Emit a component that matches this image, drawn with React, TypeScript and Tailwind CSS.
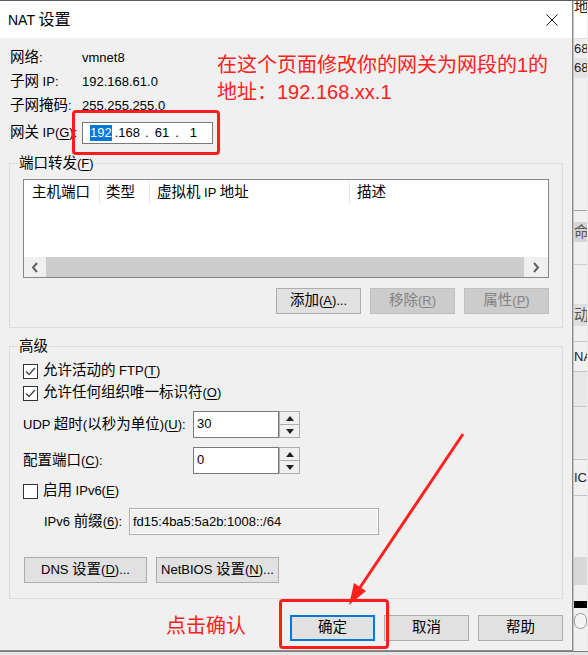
import React from 'react';

const CJK_RE = /([\u3000-\u303f\u4e00-\u9fff\uff00-\uffef]+)/;

// Latin text runs at Arial widths, CJK runs a bit larger (YaHei UI look)
function Txt({ s }: { s: string }) {
  return (
    <span>
      {s.split(CJK_RE).map((p, i) =>
        i % 2 === 1 ? (
          <span key={i} className="text-[14.5px]">
            {p}
          </span>
        ) : (
          p
        )
      )}
    </span>
  );
}

// '&' marks the access-key letter, underlined like a Win32 label
function Lbl({ s }: { s: string }) {
  const i = s.indexOf('&');
  if (i < 0) return <Txt s={s} />;
  return (
    <span>
      <Txt s={s.slice(0, i)} />
      <span className="underline underline-offset-2">{s[i + 1]}</span>
      <Txt s={s.slice(i + 2)} />
    </span>
  );
}

interface BtnProps {
  s: string;
  w?: string;
  disabled?: boolean;
  primary?: boolean;
}

function Btn({ s, w = 'w-[85px]', disabled, primary }: BtnProps) {
  let look = 'border border-[#adadad] bg-[#e1e1e1]';
  if (disabled) look = 'border border-[#bfbfbf] bg-[#cccccc] text-[#838383]';
  if (primary) look = 'border-2 border-[#0078d7] bg-[#e1e1e1]';
  return (
    <div className={`${w} h-[26px] flex items-center justify-center ${look}`}>
      <Lbl s={s} />
    </div>
  );
}

function Check({ on }: { on?: boolean }) {
  return (
    <div className="w-[15px] h-[15px] border border-[#333333] bg-white shrink-0">
      {on && (
        <svg width="13" height="13" viewBox="0 0 13 13">
          <polyline points="2,6.5 5,9.5 11,3" fill="none" stroke="#444" strokeWidth="1.3" />
        </svg>
      )}
    </div>
  );
}

function Spin({ value }: { value: string }) {
  return (
    <div className="flex h-[27px]">
      <div className="w-[86px] h-[27px] border border-[#7a7a7a] bg-white pl-[3px] pt-[3px] leading-[18px]">
        {value}
      </div>
      <div className="w-[21px] flex flex-col">
        <div className="flex-1 border border-[#adadad] bg-[#f0f0f0] flex items-center justify-center">
          <svg width="8" height="5" viewBox="0 0 8 5">
            <polygon points="0,5 4,0 8,5" fill="#222" />
          </svg>
        </div>
        <div className="flex-1 border border-t-0 border-[#adadad] bg-[#f0f0f0] flex items-center justify-center">
          <svg width="8" height="5" viewBox="0 0 8 5">
            <polygon points="0,0 8,0 4,5" fill="#222" />
          </svg>
        </div>
      </div>
    </div>
  );
}

function Chevron({ right }: { right?: boolean }) {
  return (
    <svg width="8" height="11" viewBox="0 0 8 11">
      <polyline
        points={right ? '2,1 6,5.5 2,10' : '6,1 2,5.5 6,10'}
        fill="none"
        stroke="#606060"
        strokeWidth="2"
      />
    </svg>
  );
}

function Dialog() {
  return (
    <div className="w-[573px] flex flex-col border-r border-b border-[#8c8c8c]">
      <div className="h-[37px] bg-white flex items-center justify-between pl-[8px] pr-[14px]">
        <span className="text-[14px]">
          NAT <span className="text-[16px]">设置</span>
        </span>
        <svg width="12" height="12" viewBox="0 0 12 12">
          <path d="M0.5 0.5L11.5 11.5M11.5 0.5L0.5 11.5" stroke="#111" strokeWidth="1" />
        </svg>
      </div>

      <div className="flex-1 bg-[#f0f0f0] px-[9px] pt-[8px] flex flex-col">
        <div className="pl-[1px]">
          <div className="h-[24px] flex items-center">
            <span className="w-[72px]"><Txt s="网络:" /></span>
            <span>vmnet8</span>
          </div>
          <div className="h-[24px] flex items-center">
            <span className="w-[72px]"><Txt s="子网 IP:" /></span>
            <span>192.168.61.0</span>
          </div>
          <div className="h-[24px] flex items-center">
            <span className="w-[72px]"><Txt s="子网掩码:" /></span>
            <span>255.255.255.0</span>
          </div>
          <div className="h-[30px] flex items-center">
            <span className="w-[72px]"><Lbl s="网关 IP(&G):" /></span>
            <div className="w-[131px] h-[22px] border border-[#7a7a7a] bg-white flex items-center pl-[7px]">
              <span className="bg-[#0078d7] text-white leading-[16px]">192</span>
              <span className="ml-[3px]">.</span>
              <span>168</span>
              <span className="ml-[5px]">.</span>
              <span className="ml-[6px]">61</span>
              <span className="ml-[6px]">.</span>
              <span className="ml-[11px]">1</span>
            </div>
          </div>
        </div>

        <fieldset className="mt-[5px] border border-[#dcdcdc] px-[8px] pb-[13px]">
          <legend className="px-[1px] leading-[20px]">
            <Lbl s="端口转发(&F)" />
          </legend>
          <div className="pl-[5px] pr-[5px] pt-[5px]">
            <div className="h-[99px] border border-[#828790] bg-white flex flex-col">
              <div className="h-[25px] flex">
                <div className="w-[75px] pl-[8px] flex items-center"><Txt s="主机端口" /></div>
                <div className="w-px my-[1px] bg-[#e5e5e5]" />
                <div className="w-[49px] pl-[6px] flex items-center"><Txt s="类型" /></div>
                <div className="w-px my-[1px] bg-[#e5e5e5]" />
                <div className="w-[199px] pl-[7px] flex items-center"><Txt s="虚拟机 IP 地址" /></div>
                <div className="w-px my-[1px] bg-[#e5e5e5]" />
                <div className="flex-1 pl-[7px] flex items-center"><Txt s="描述" /></div>
              </div>
              <div className="flex-1" />
              <div className="h-[20px] flex">
                <div className="w-[22px] bg-[#f0f0f0] flex items-center justify-center">
                  <Chevron />
                </div>
                <div className="flex-1 bg-[#cdcdcd]" />
                <div className="w-[24px] bg-[#f0f0f0] flex items-center justify-center">
                  <Chevron right />
                </div>
              </div>
            </div>
            <div className="mt-[10px] flex justify-end gap-[9px]">
              <Btn s="添加(&A)..." />
              <Btn s="移除(&R)" disabled />
              <Btn s="属性(&P)" disabled />
            </div>
          </div>
        </fieldset>

        <fieldset className="mt-[8px] border border-[#dcdcdc] px-[8px] pb-[15px]">
          <legend className="px-[1px] leading-[20px]">
            <Txt s="高级" />
          </legend>
          <div className="pl-[5px] pt-[3px]">
            <div className="h-[22px] flex items-center gap-[5px]">
              <Check on />
              <Lbl s="允许活动的 FTP(&T)" />
            </div>
            <div className="h-[22px] flex items-center gap-[5px]">
              <Check on />
              <Lbl s="允许任何组织唯一标识符(&O)" />
            </div>
            <div className="mt-[7px] h-[27px] flex items-center">
              <span className="w-[170px]"><Lbl s="UDP 超时(以秒为单位)(&U):" /></span>
              <Spin value="30" />
            </div>
            <div className="mt-[9px] h-[27px] flex items-center">
              <span className="w-[170px]"><Lbl s="配置端口(&C):" /></span>
              <Spin value="0" />
            </div>
            <div className="mt-[6px] h-[22px] flex items-center gap-[5px]">
              <Check />
              <Lbl s="启用 IPv6(&E)" />
            </div>
            <div className="mt-[6px] h-[27px] flex items-center">
              <span className="w-[106px] pl-[21px]"><Lbl s="IPv6 前缀(&6):" /></span>
              <div className="w-[250px] h-[27px] border border-[#adadad] bg-[#f0f0f0] shadow-[inset_0_0_0_1px_#ffffff] pl-[3px] flex items-center">
                fd15:4ba5:5a2b:1008::/64
              </div>
            </div>
            <div className="mt-[22px] pl-[1px] flex gap-[9px]">
              <Btn s="DNS 设置(&D)..." w="w-[123px]" />
              <Btn s="NetBIOS 设置(&N)..." w="w-[123px]" />
            </div>
          </div>
        </fieldset>

        <div className="mt-[16px] flex justify-end gap-[9px]">
          <Btn s="确定" primary />
          <Btn s="取消" />
          <Btn s="帮助" />
        </div>
      </div>
    </div>
  );
}

// part of the window behind the dialog, visible on the right edge
function Backdrop() {
  return (
    <div className="w-[14px] flex flex-col bg-[#f0f0f0] border-l border-[#c4c4c4] overflow-hidden whitespace-nowrap text-[13px] text-[#222]">
      <div className="h-[12px] leading-[12px] bg-white text-[14.5px]">地址</div>
      <div className="h-[25px] bg-white" />
      <div className="h-[20px] leading-[20px] border-t border-[#dcdcdc]">68.</div>
      <div className="h-[20px] leading-[20px] bg-[#e4e4e4]">68.</div>
      <div className="h-[132px]" />
      <div className="h-[12px] border-t border-[#a0a0a0]" />
      <div className="h-[20px] leading-[20px] bg-[#d6d6d6] text-[#555] text-[14.5px]">命令</div>
      <div className="h-[22px]" />
      <div className="h-[40px] border-t border-[#cfcfcf]" />
      <div className="h-[22px] leading-[22px] bg-[#dedede] text-[#555] text-[14.5px]">动作</div>
      <div className="h-[15px]" />
      <div className="h-[30px] leading-[30px] border-t border-[#c4c4c4]">NAT</div>
      <div className="h-[35px] border-t border-[#c4c4c4] bg-[#e8e8e8]" />
      <div className="h-[53px] border-t border-[#c4c4c4] bg-[#ececec]" />
      <div className="h-[36px] leading-[36px] border-t border-[#c4c4c4]">ICF</div>
      <div className="h-[62px] border-t border-[#c4c4c4]" />
      <div className="h-[28px] bg-[#d8d8d8]" />
      <div className="h-[16px]" />
      <div className="h-[7px] bg-black" />
      <div className="h-[26px] flex items-center">
        <div className="w-[16px] h-[16px] rounded-full border border-[#999] bg-[#f4f4f4]" />
      </div>
    </div>
  );
}

function Annotations() {
  const red = '#ff2020';
  return (
    <>
      <div className="absolute left-[217px] top-[52px] text-[20px] leading-[27px] text-[#ff2020] whitespace-nowrap">
        <div>在这个页面修改你的网关为网段的1的</div>
        <div>地址：192.168.xx.1</div>
      </div>
      <div className="absolute left-[72px] top-[110px] w-[148px] h-[45px] border-[3px] border-[#ff1c1c] rounded-[4px]" />
      <div className="absolute left-[279px] top-[599px] w-[110px] h-[50px] border-[3px] border-[#ff1c1c] rounded-[4px]" />
      <div className="absolute left-[166px] top-[613px] text-[20px] leading-[27px] text-[#ff2020]">点击确认</div>
      <svg className="absolute left-0 top-0 pointer-events-none" width="588" height="655" viewBox="0 0 588 655">
        <line x1="463" y1="434" x2="359" y2="589" stroke={red} strokeWidth="3" />
        <polygon points="349,605 366,591 354,583" fill={red} />
      </svg>
    </>
  );
}

export default function App() {
  return (
    <div className="relative w-[588px] h-[655px] overflow-hidden bg-[#ececec] font-['Liberation_Sans','Noto_Sans_CJK_SC',sans-serif] text-[13px] text-black">
      <div className="h-[1px] bg-[#5f5f5f]" />
      <div className="h-[650px] flex">
        <Dialog />
        <Backdrop />
      </div>
      <div className="h-[4px] border-t border-[#7d7d7d] bg-[#e4e4e4]" />
      <Annotations />
    </div>
  );
}
